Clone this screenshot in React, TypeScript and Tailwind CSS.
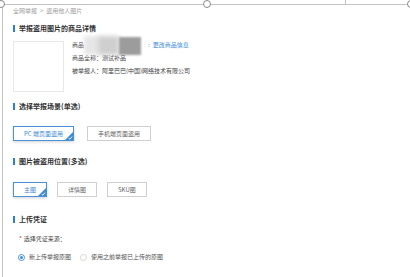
import React from "react";

const font = { fontFamily: '"Noto Sans CJK SC", "Noto Sans", sans-serif' };

function Heading({ children, className = "" }: { children: React.ReactNode; className?: string }) {
  return (
    <div className={`flex h-[10px] items-center ${className}`}>
      <span className="h-[7px] w-[2px] bg-[#2b7fd3]" />
      <span className="ml-[4px] text-[7px] font-bold leading-[10px] text-[#333]">{children}</span>
    </div>
  );
}

function Choice({ label, active = false }: { label: string; active?: boolean }) {
  return (
    <div
      className={`relative flex h-[15px] items-center border px-[10px] text-[6px] leading-none ${
        active
          ? "border-[#4a92d8] text-[#3d8ad6] shadow-[0_1px_3px_rgba(0,0,0,0.18)]"
          : "border-[#cfcfcf] text-[#666]"
      }`}
    >
      {label}
      {active && (
        <svg className="absolute bottom-0 right-0" width="8" height="8" viewBox="0 0 8 8">
          <path d="M8 0 L8 8 L0 8 Z" fill="#3d8ad6" />
          <path d="M3.6 6.2 L4.9 7.2 L7 4.6" stroke="#fff" strokeWidth="0.9" fill="none" />
        </svg>
      )}
    </div>
  );
}

function Radio({ label, checked = false }: { label: string; checked?: boolean }) {
  return (
    <div className="flex items-center">
      <span
        className={`flex h-[7px] w-[7px] items-center justify-center rounded-full border ${
          checked ? "border-[#4a92d8]" : "border-[#d6d6d6]"
        }`}
      >
        {checked && <span className="h-[3px] w-[3px] rounded-full bg-[#3d8ad6]" />}
      </span>
      <span className="ml-[4px] text-[6px] leading-[10px] text-[#555]">{label}</span>
    </div>
  );
}

export default function App() {
  return (
    <div className="relative h-[277px] w-[410px] overflow-hidden bg-white" style={font}>
      <div className="ml-[2px] mt-[4px] h-[273px] border-l border-t border-[#c4c4c4] pl-[10px]">
        <div className="flex h-[11px] items-center gap-[3px] text-[6px] leading-[11px] text-[#a0a0a0]">
          <span>全网举报</span>
          <span>&gt;</span>
          <span>盗用他人图片</span>
        </div>

        <Heading className="mt-[7px]">举报盗用图片的商品详情</Heading>

        <div className="mt-[8px] flex items-start">
          <div className="h-[51px] w-[51px] border border-[#e8e8e8]" />
          <div className="-mt-[3px] ml-[8px] text-[6px] leading-[13px] text-[#444]">
            <div className="flex items-center">
              <span>商品</span>
              <span className="relative h-[13px] w-[64px]">
                <span className="absolute left-0 top-[-2px] h-[19px] w-[16px] bg-[#e6e6e6] blur-[2px]" />
                <span className="absolute left-[14px] top-[-2px] h-[19px] w-[21px] bg-[#cfcfcf] blur-[2px]" />
                <span className="absolute left-[35px] top-[-1px] h-[18px] w-[22px] bg-[#9c9c9c] blur-[1px]" />
              </span>
              <span className="text-[#3d8ad6]">:</span>
              <span className="ml-[3px] text-[#3d8ad6]">更改商品信息</span>
            </div>
            <div>商品全称：测试补品</div>
            <div>被举报人：阿里巴巴(中国)网络技术有限公司</div>
          </div>
        </div>

        <Heading className="mt-[9px]">选择举报场景(单选)</Heading>
        <div className="mt-[15px] flex gap-[13px]">
          <Choice label="PC 端页面盗用" active />
          <Choice label="手机端页面盗用" />
        </div>

        <Heading className="mt-[15px]">图片被盗用位置(多选)</Heading>
        <div className="mt-[16px] flex gap-[10px]">
          <Choice label="主图" active />
          <Choice label="详情图" />
          <Choice label="SKU图" />
        </div>

        <Heading className="mt-[17px]">上传凭证</Heading>
        <div className="mt-[10px] flex items-center pl-[6px] text-[6px] leading-[10px] text-[#444]">
          <span className="mr-[2px] text-[#e4393c]">*</span>
          <span>选择凭证来源：</span>
        </div>
        <div className="mt-[8px] flex items-center gap-[9px] pl-[5px]">
          <Radio label="新上传举报原图" checked />
          <Radio label="使用之前举报已上传的原图" />
        </div>
      </div>

      {/* selection handles over the frame */}
      <span className="absolute left-[345px] top-0 h-[4px] w-px bg-[#c4c4c4]" />
      <span className="absolute left-[-3px] top-0 h-[8px] w-[8px] rounded-full border border-[#8a8a8a] bg-white" />
      <span className="absolute left-[203px] top-0 h-[8px] w-[8px] rounded-full border border-[#8a8a8a] bg-white" />
      <span className="absolute left-[407px] top-0 h-[8px] w-[8px] rounded-full border border-[#8a8a8a] bg-white" />
    </div>
  );
}
